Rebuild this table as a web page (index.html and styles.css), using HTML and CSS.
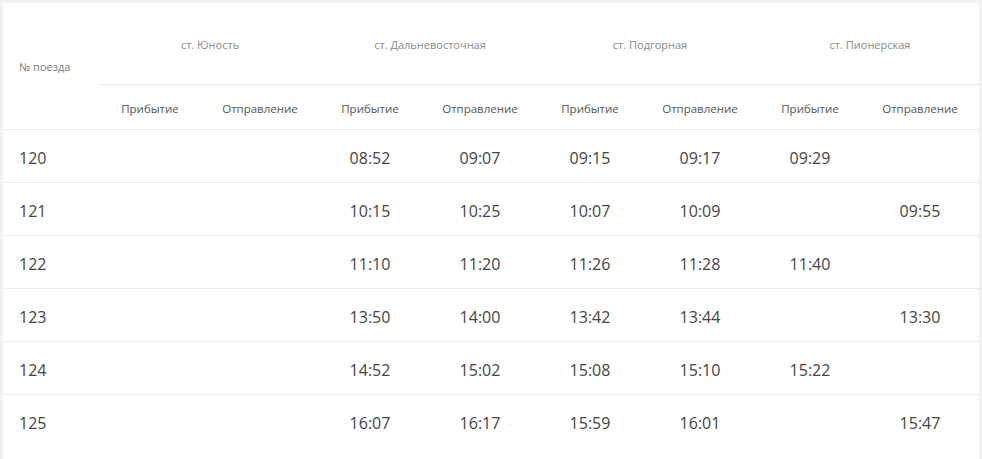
FILE: index.html
```html
<!DOCTYPE html>
<html lang="ru">
<head>
<meta charset="utf-8">
<link rel="stylesheet" href="styles.css">
</head>
<body>
<div class="card">
  <table class="schedule">
    <colgroup>
      <col class="c-num">
      <col class="c-arr"><col class="c-dep">
      <col class="c-arr"><col class="c-dep">
      <col class="c-arr"><col class="c-dep">
      <col class="c-arr"><col class="c-dep">
    </colgroup>
    <thead>
      <tr class="h1">
        <th rowspan="2" class="num-head">№ поезда</th>
        <th colspan="2" class="station">ст. Юность</th>
        <th colspan="2" class="station">ст. Дальневосточная</th>
        <th colspan="2" class="station">ст. Подгорная</th>
        <th colspan="2" class="station">ст. Пионерская</th>
      </tr>
      <tr class="h2">
        <th>Прибытие</th><th>Отправление</th>
        <th>Прибытие</th><th>Отправление</th>
        <th>Прибытие</th><th>Отправление</th>
        <th>Прибытие</th><th>Отправление</th>
      </tr>
    </thead>
    <tbody>
      <tr><td class="num">120</td><td></td><td></td><td>08:52</td><td>09:07</td><td>09:15</td><td>09:17</td><td>09:29</td><td></td></tr>
      <tr><td class="num">121</td><td></td><td></td><td>10:15</td><td>10:25</td><td>10:07</td><td>10:09</td><td></td><td>09:55</td></tr>
      <tr><td class="num">122</td><td></td><td></td><td>11:10</td><td>11:20</td><td>11:26</td><td>11:28</td><td>11:40</td><td></td></tr>
      <tr><td class="num">123</td><td></td><td></td><td>13:50</td><td>14:00</td><td>13:42</td><td>13:44</td><td></td><td>13:30</td></tr>
      <tr><td class="num">124</td><td></td><td></td><td>14:52</td><td>15:02</td><td>15:08</td><td>15:10</td><td>15:22</td><td></td></tr>
      <tr><td class="num">125</td><td></td><td></td><td>16:07</td><td>16:17</td><td>15:59</td><td>16:01</td><td></td><td>15:47</td></tr>
    </tbody>
  </table>
</div>
</body>
</html>
```

FILE: styles.css
```css
html, body {
  margin: 0;
  padding: 0;
  background: #f1f1f1;
}
body {
  font-family: "Open Sans", "Liberation Sans", sans-serif;
  padding: 3px 3px 0 3px;
  height: 459px;
  box-sizing: border-box;
  overflow: hidden;
}
.card {
  background: #fff;
  height: 100%;
}
.schedule {
  border-collapse: collapse;
  table-layout: fixed;
  width: 976px;
}
.c-num { width: 97px; }
.c-arr { width: 100px; }
.c-dep { width: 120px; }

.schedule th {
  font-weight: normal;
  padding: 0;
}
.h1 { height: 81px; }
.h1 .station {
  font-size: 11px;
  color: #8a8a8a;
  text-align: center;
  border-bottom: 1px solid #e4e4e4;
  padding-top: 2px;
}
.num-head {
  font-size: 11px;
  color: #7a7a7a;
  text-align: left;
  padding-left: 16px !important;
  padding-top: 2px !important;
  border-bottom: 1px solid #ececec;
}
.h2 { height: 45px; }
.h2 th {
  font-size: 11.5px;
  color: #555;
  text-align: center;
  border-bottom: 1px solid #ececec;
  padding-top: 3px;
}
.schedule td {
  height: 53px;
  padding: 5px 0 0 0;
  font-size: 16px;
  color: #444;
  text-align: center;
  border-bottom: 1px solid #ececec;
  box-sizing: border-box;
}
.schedule tbody tr:last-child td { border-bottom: none; }
.schedule td.num {
  text-align: left;
  padding-left: 16px;
}
```
